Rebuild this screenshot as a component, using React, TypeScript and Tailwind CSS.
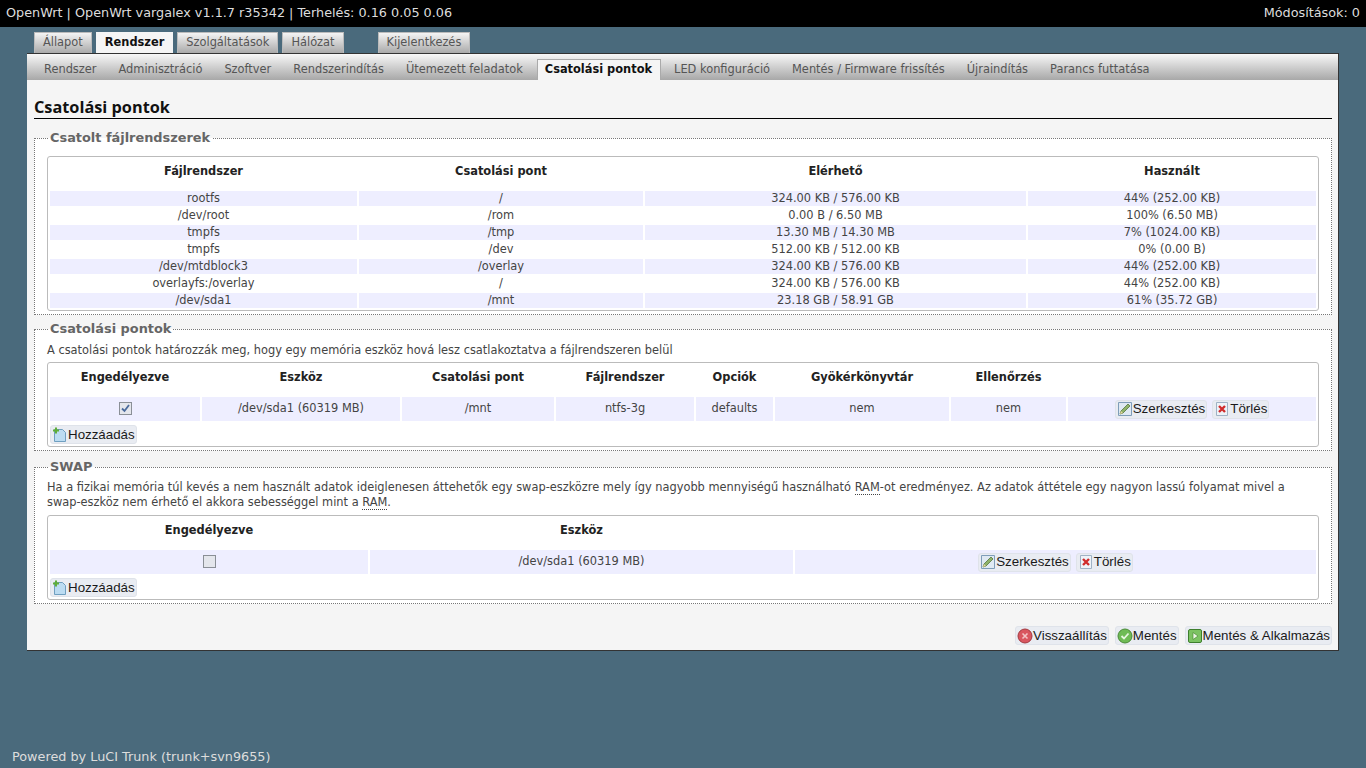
import type { ReactNode } from "react";

const mainTabs = ["Állapot", "Rendszer", "Szolgáltatások", "Hálózat"];
const subTabs = [
  "Rendszer",
  "Adminisztráció",
  "Szoftver",
  "Rendszerindítás",
  "Ütemezett feladatok",
  "Csatolási pontok",
  "LED konfiguráció",
  "Mentés / Firmware frissítés",
  "Újraindítás",
  "Parancs futtatása",
];

const filesystems = [
  ["rootfs", "/", "324.00 KB / 576.00 KB", "44% (252.00 KB)"],
  ["/dev/root", "/rom", "0.00 B / 6.50 MB", "100% (6.50 MB)"],
  ["tmpfs", "/tmp", "13.30 MB / 14.30 MB", "7% (1024.00 KB)"],
  ["tmpfs", "/dev", "512.00 KB / 512.00 KB", "0% (0.00 B)"],
  ["/dev/mtdblock3", "/overlay", "324.00 KB / 576.00 KB", "44% (252.00 KB)"],
  ["overlayfs:/overlay", "/", "324.00 KB / 576.00 KB", "44% (252.00 KB)"],
  ["/dev/sda1", "/mnt", "23.18 GB / 58.91 GB", "61% (35.72 GB)"],
];

function EditIcon() {
  return (
    <svg viewBox="0 0 16 16" className="w-4 h-4 shrink-0">
      <path d="M1.5 1.5h13v13h-13z" fill="#dfe9f3" stroke="#7f9db9" />
      <path d="M3 13l1-3 7-7 2 2-7 7z" fill="#8fb36a" stroke="#55763c" strokeWidth="0.8" />
      <path d="M3 13l1-3 2 2z" fill="#e8d9a0" />
    </svg>
  );
}

function DeleteIcon() {
  return (
    <svg viewBox="0 0 16 16" className="w-4 h-4 shrink-0">
      <path d="M2.5 1.5h11v13h-11z" fill="#eef3f8" stroke="#9fb2c5" />
      <path d="M5 5l6 6M11 5l-6 6" stroke="#d02c2c" strokeWidth="2.4" />
    </svg>
  );
}

function AddIcon() {
  return (
    <svg viewBox="0 0 16 16" className="w-4 h-4 shrink-0">
      <path d="M2.5 2.5h8l3 3v9h-11z" fill="#bcdcf2" stroke="#6f9fc0" />
      <path d="M4 0.5v6M1 3.5h6" stroke="#5fae3a" strokeWidth="2" />
    </svg>
  );
}

function ResetIcon() {
  return (
    <svg viewBox="0 0 16 16" className="w-4 h-4 shrink-0">
      <circle cx="8" cy="8" r="7" fill="#d9565f" stroke="#a33a40" />
      <path d="M5.5 5.5l5 5M10.5 5.5l-5 5" stroke="#f3c4c6" strokeWidth="1.6" />
    </svg>
  );
}

function SaveIcon() {
  return (
    <svg viewBox="0 0 16 16" className="w-4 h-4 shrink-0">
      <circle cx="8" cy="8" r="7" fill="#6fbb55" stroke="#4b8a38" />
      <path d="M4.5 8l2.5 2.5 4.5-5" fill="none" stroke="#e8f6e0" strokeWidth="1.8" />
    </svg>
  );
}

function ApplyIcon() {
  return (
    <svg viewBox="0 0 16 16" className="w-4 h-4 shrink-0">
      <rect x="1.5" y="1.5" width="13" height="13" rx="1.5" fill="#7cc362" stroke="#3f7f2e" />
      <path d="M6 4.5l5 3.5-5 3.5z" fill="#eaf7e2" stroke="#3f7f2e" strokeWidth="0.6" />
    </svg>
  );
}

function Btn({ icon, children }: { icon: ReactNode; children: ReactNode }) {
  return (
    <button className="inline-flex items-center h-[19px] px-[1px] rounded-[3px] border border-[#dfe3ea] bg-[#e9ecf2] text-[13.33px] leading-none text-[#1a1a1a] font-['Liberation_Sans',sans-serif]">
      {icon}
      <span>{children}</span>
    </button>
  );
}

function Check({ checked }: { checked?: boolean }) {
  return (
    <span className="inline-flex items-center justify-center w-[13px] h-[13px] border border-[#8a8f96] bg-[#e4e6ec] align-middle">
      {checked && (
        <svg viewBox="0 0 11 11" className="w-[11px] h-[11px]">
          <path d="M2 5.5l2.5 2.5 4.5-6" fill="none" stroke="#4a6a9c" strokeWidth="1.8" />
        </svg>
      )}
    </span>
  );
}

function Section({ title, children }: { title: string; children: ReactNode }) {
  return (
    <fieldset className="border border-dotted border-[#777] bg-white px-3 pb-[3px] min-w-0">
      <legend className="ml-[1px] px-[2px] text-[12.9px] leading-[18px] font-bold text-[#666]">{title}</legend>
      {children}
    </fieldset>
  );
}

function Box({ children }: { children: ReactNode }) {
  return <div className="border border-[#bbb] rounded-[3px]">{children}</div>;
}

export default function App() {
  return (
    <div className="min-h-[768px] flex flex-col bg-[#4a6a7c] font-['DejaVu_Sans',sans-serif] text-[11.4px] text-[#444]">
      <header className="h-[27px] bg-black text-[#ddd] text-[12.8px] flex items-center justify-between px-[6px] pb-[1px]">
        <span>OpenWrt | OpenWrt vargalex v1.1.7 r35342 | Terhelés: 0.16 0.05 0.06</span>
        <span>Módosítások: 0</span>
      </header>

      <nav className="h-[26px] pt-[5px] pl-[34px] flex items-end gap-[4px]">
        {mainTabs.map((t) => (
          <div
            key={t}
            className={
              t === "Rendszer"
                ? "h-[21px] px-[9px] flex items-center bg-[#f5f5f5] text-[#111] font-bold"
                : "h-[21px] px-[8px] flex items-center border-x border-t border-[#bbb] bg-gradient-to-b from-[#f4f4f4] to-[#aaa] text-[#555]"
            }
          >
            {t}
          </div>
        ))}
        <div className="ml-[30px] h-[21px] px-[8px] flex items-center border-x border-t border-[#bbb] bg-gradient-to-b from-[#f4f4f4] to-[#aaa] text-[#555]">
          Kijelentkezés
        </div>
      </nav>

      <main className="mx-[27px] w-[1312px] h-[598px] bg-[#f5f5f5] border-t border-r border-b border-[#333] flex flex-col">
        <div className="h-[26px] shrink-0 pl-[8px] flex items-end bg-gradient-to-b from-[#f8f8f8] to-[#a8a8a8]">
          {subTabs.map((t) => (
            <div
              key={t}
              className={
                t === "Csatolási pontok"
                  ? "h-[21px] pl-[7px] pr-[8px] ml-[1px] mr-[4px] flex items-center bg-[#f5f5f5] border-x border-t border-[#aaa] font-bold text-[#111]"
                  : "h-[21px] px-[9px] mr-[4px] flex items-center text-[#555] pt-[1px]"
              }
            >
              {t}
            </div>
          ))}
        </div>

        <div className="pl-[7px] pr-[6px] flex flex-col grow">
          <h2 className="mt-[18px] h-[21px] border-b border-black text-[16.3px] leading-[18px] font-bold text-[#111] font-['Open_Sans',sans-serif]">
            Csatolási pontok
          </h2>

          <div className="mt-[10px]">
            <Section title="Csatolt fájlrendszerek">
              <div className="pt-[9px]">
                <Box>
                  <table className="w-full table-fixed border-separate border-spacing-[2px] text-center">
                    <colgroup>
                      <col className="w-[307px]" />
                      <col className="w-[284px]" />
                      <col className="w-[381px]" />
                      <col />
                    </colgroup>
                    <thead>
                      <tr className="h-[30px] font-bold text-[#222]">
                        <th className="pb-[5px]">Fájlrendszer</th>
                        <th className="pb-[5px]">Csatolási pont</th>
                        <th className="pb-[5px]">Elérhető</th>
                        <th className="pb-[5px]">Használt</th>
                      </tr>
                    </thead>
                    <tbody>
                      {filesystems.map((row, i) => (
                        <tr key={i} className={i % 2 === 0 ? "h-[15px] bg-[#eeeeff]" : "h-[15px]"}>
                          {row.map((c, j) => (
                            <td key={j} className="p-0 leading-[15px]">
                              {c}
                            </td>
                          ))}
                        </tr>
                      ))}
                    </tbody>
                  </table>
                </Box>
              </div>
            </Section>
          </div>

          <div className="mt-[5px]">
            <Section title="Csatolási pontok">
              <p className="mt-[4px] mb-[4px] leading-[16px]">
                A csatolási pontok határozzák meg, hogy egy memória eszköz hová lesz csatlakoztatva a fájlrendszeren belül
              </p>
              <Box>
                <table className="w-full table-fixed border-separate border-spacing-[2px] text-center">
                  <colgroup>
                    <col className="w-[150px]" />
                    <col className="w-[198px]" />
                    <col className="w-[152px]" />
                    <col className="w-[138px]" />
                    <col className="w-[77px]" />
                    <col className="w-[174px]" />
                    <col className="w-[115px]" />
                    <col />
                  </colgroup>
                  <thead>
                    <tr className="h-[30px] font-bold text-[#222]">
                      <th className="pb-[5px]">Engedélyezve</th>
                      <th className="pb-[5px]">Eszköz</th>
                      <th className="pb-[5px]">Csatolási pont</th>
                      <th className="pb-[5px]">Fájlrendszer</th>
                      <th className="pb-[5px]">Opciók</th>
                      <th className="pb-[5px]">Gyökérkönyvtár</th>
                      <th className="pb-[5px]">Ellenőrzés</th>
                      <th />
                    </tr>
                  </thead>
                  <tbody>
                    <tr className="h-[24px] bg-[#eeeeff]">
                      <td className="p-0"><Check checked /></td>
                      <td className="p-0">/dev/sda1 (60319 MB)</td>
                      <td className="p-0">/mnt</td>
                      <td className="p-0">ntfs-3g</td>
                      <td className="p-0">defaults</td>
                      <td className="p-0">nem</td>
                      <td className="p-0">nem</td>
                      <td className="p-0">
                        <div className="flex justify-center gap-[5px]">
                          <Btn icon={<EditIcon />}>Szerkesztés</Btn>
                          <Btn icon={<DeleteIcon />}>Törlés</Btn>
                        </div>
                      </td>
                    </tr>
                  </tbody>
                </table>
                <div className="pl-[2px] pt-[2px] pb-[2px] flex">
                  <Btn icon={<AddIcon />}>Hozzáadás</Btn>
                </div>
              </Box>
            </Section>
          </div>

          <div className="mt-[7px]">
            <Section title="SWAP">
              <p className="mt-[4px] mb-[5px] leading-[15px]">
                Ha a fizikai memória túl kevés a nem használt adatok ideiglenesen áttehetők egy swap-eszközre mely így
                nagyobb mennyiségű használható{" "}
                <abbr className="no-underline border-b border-dotted border-[#444]">RAM</abbr>-ot eredményez. Az adatok
                áttétele egy nagyon lassú folyamat mivel a swap-eszköz nem érhető el akkora sebességgel mint a{" "}
                <abbr className="no-underline border-b border-dotted border-[#444]">RAM</abbr>.
              </p>
              <Box>
                <table className="w-full table-fixed border-separate border-spacing-[2px] text-center">
                  <colgroup>
                    <col className="w-[318px]" />
                    <col className="w-[423px]" />
                    <col />
                  </colgroup>
                  <thead>
                    <tr className="h-[30px] font-bold text-[#222]">
                      <th className="pb-[5px]">Engedélyezve</th>
                      <th className="pb-[5px]">Eszköz</th>
                      <th />
                    </tr>
                  </thead>
                  <tbody>
                    <tr className="h-[24px] bg-[#eeeeff]">
                      <td className="p-0"><Check /></td>
                      <td className="p-0">/dev/sda1 (60319 MB)</td>
                      <td className="p-0">
                        <div className="flex justify-center gap-[5px]">
                          <Btn icon={<EditIcon />}>Szerkesztés</Btn>
                          <Btn icon={<DeleteIcon />}>Törlés</Btn>
                        </div>
                      </td>
                    </tr>
                  </tbody>
                </table>
                <div className="pl-[2px] pt-[2px] pb-[2px] flex">
                  <Btn icon={<AddIcon />}>Hozzáadás</Btn>
                </div>
              </Box>
            </Section>
          </div>

          <div className="mt-auto mb-[5px] flex justify-end gap-[6px]">
            <Btn icon={<ResetIcon />}>Visszaállítás</Btn>
            <Btn icon={<SaveIcon />}>Mentés</Btn>
            <Btn icon={<ApplyIcon />}>Mentés &amp; Alkalmazás</Btn>
          </div>
        </div>
      </main>

      <footer className="mt-auto pl-[12px] pb-[3px] text-[12.8px] leading-[16px] text-[#ddd]">
        Powered by LuCI Trunk (trunk+svn9655)
      </footer>
    </div>
  );
}
